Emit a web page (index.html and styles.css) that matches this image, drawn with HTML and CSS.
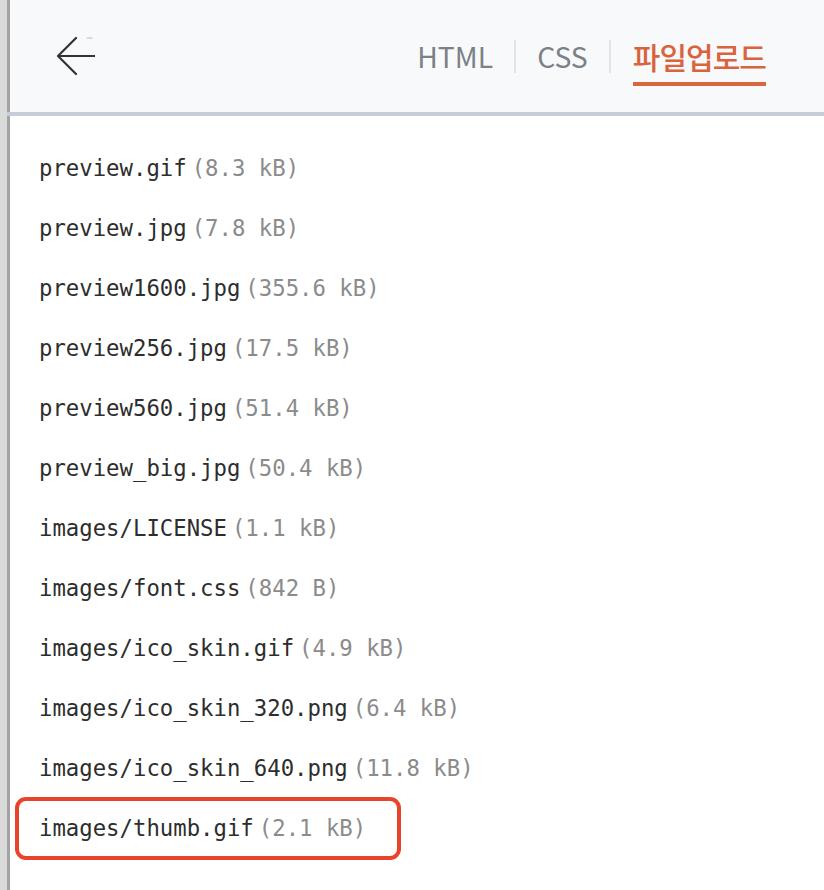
FILE: index.html
```html
<!DOCTYPE html>
<html lang="ko">
<head>
<meta charset="utf-8">
<title>파일업로드</title>
<link rel="stylesheet" href="styles.css">
</head>
<body>
<div class="frame">
  <header class="topbar">
    <button class="back" aria-label="뒤로">
      <svg width="40" height="40" viewBox="0 0 40 40" fill="none" stroke="#333" stroke-width="2.2" stroke-linecap="round" stroke-linejoin="round">
        <path d="M19 2 L1 20 L19 38"/>
        <path d="M1 20 H38" stroke-linecap="butt"/>
        <path d="M30 2 H35" stroke="#bbb" stroke-width="1"/>
      </svg>
    </button>
    <nav class="tabs">
      <a class="tab">HTML</a>
      <span class="sep"></span>
      <a class="tab">CSS</a>
      <span class="sep"></span>
      <a class="tab active">파일업로드</a>
    </nav>
  </header>
  <ul class="files">
    <li class="file"><span class="name">preview.gif</span><span class="size">(8.3 kB)</span></li>
    <li class="file"><span class="name">preview.jpg</span><span class="size">(7.8 kB)</span></li>
    <li class="file"><span class="name">preview1600.jpg</span><span class="size">(355.6 kB)</span></li>
    <li class="file"><span class="name">preview256.jpg</span><span class="size">(17.5 kB)</span></li>
    <li class="file"><span class="name">preview560.jpg</span><span class="size">(51.4 kB)</span></li>
    <li class="file"><span class="name">preview_big.jpg</span><span class="size">(50.4 kB)</span></li>
    <li class="file"><span class="name">images/LICENSE</span><span class="size">(1.1 kB)</span></li>
    <li class="file"><span class="name">images/font.css</span><span class="size">(842 B)</span></li>
    <li class="file"><span class="name">images/ico_skin.gif</span><span class="size">(4.9 kB)</span></li>
    <li class="file"><span class="name">images/ico_skin_320.png</span><span class="size">(6.4 kB)</span></li>
    <li class="file"><span class="name">images/ico_skin_640.png</span><span class="size">(11.8 kB)</span></li>
    <li class="file"><span class="hl"><span class="name">images/thumb.gif</span><span class="size">(2.1 kB)</span></span></li>
  </ul>
</div>
</body>
</html>
```
FILE: styles.css
```css
html, body {
  margin: 0;
  padding: 0;
  background: #fff;
}
body {
  width: 824px;
  height: 890px;
  overflow: hidden;
}
.frame {
  height: 890px;
  border-left: 7px solid #dadada;
  box-shadow: inset 3px 0 0 #a3a3a3;
  padding-left: 3px;
  box-sizing: border-box;
}
.topbar {
  height: 112px;
  background: #f8f9fb;
  border-bottom: 4px solid #c6cdd7;
  display: flex;
  align-items: center;
  justify-content: space-between;
  margin-left: -3px;
  padding: 0 58px 0 50px;
  box-shadow: inset 3px 0 0 #a3a3a3;
}
.back {
  border: 0;
  background: none;
  padding: 0;
  width: 40px;
  height: 40px;
  display: block;
  cursor: pointer;
}
.back svg { display: block; }
.tabs {
  display: flex;
  align-items: center;
  gap: 21px;
  font-family: "Noto Sans CJK KR", "Noto Sans", sans-serif;
  font-size: 28.3px;
}
.tab {
  color: #7c8188;
  line-height: 40px;
  position: relative;
}
.tab.active {
  color: #d8633c;
  font-weight: 500;
  font-size: 30px;
  letter-spacing: -0.95px;
  margin-left: 1px;
}
.tab.active::after {
  content: "";
  position: absolute;
  left: 0;
  right: 0;
  bottom: -10px;
  height: 4px;
  background: #d8663e;
}
.sep {
  width: 2px;
  height: 33px;
  background: #e3e4e6;
}
.files {
  list-style: none;
  margin: 0;
  padding: 22px 0 0 29px;
  font-family: "DejaVu Sans Mono", monospace;
  font-size: 22.3px;
}
.file {
  height: 60px;
  line-height: 60px;
  white-space: nowrap;
}
.name {
  color: #2d2d2d;
}
.size {
  color: #8b8b8b;
  margin-left: 5px;
}
.hl {
  display: inline-block;
  margin-left: -24px;
  margin-top: -2px;
  padding: 0 31px 0 20px;
  border: 4px solid #e8432b;
  border-radius: 11px;
  line-height: 55px;
}
```
